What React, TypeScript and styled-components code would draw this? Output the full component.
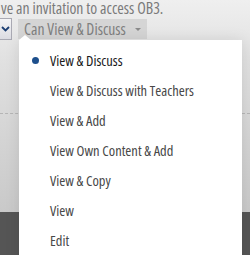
import React from "react";
import styled, { createGlobalStyle } from "styled-components";

const Global = createGlobalStyle`
  html, body { margin: 0; padding: 0; }
  body {
    width: 250px;
    height: 255px;
    overflow: hidden;
    font-family: "Open Sans", "Noto Sans", sans-serif;
    font-stretch: condensed;
    background: #d9d9d9;
  }
`;

const Page = styled.div`
  position: relative;
  width: 250px;
  height: 255px;
  overflow: hidden;
  display: flex;
  flex-direction: column;
  background: linear-gradient(to bottom, #efefef 0%, #e0e0e0 25%, #d2d2d2 60%, #c9c9c9 84%);
`;

const Intro = styled.div`
  font-size: 15.7px;
  line-height: 16px;
  height: 16px;
  color: #7a7a7a;
  padding-left: 1px;
  margin-top: 0;
  white-space: nowrap;
`;

const Controls = styled.div`
  display: flex;
  align-items: flex-start;
  gap: 5px;
  margin-top: 2px;
`;

const SelectBox = styled.div`
  width: 13px;
  height: 22px;
  margin-left: -1px;
  box-sizing: border-box;
  border: 1px solid #a9a9b3;
  border-left: none;
  background: linear-gradient(to bottom, #f4f4f6, #dcdce2);
  display: flex;
  align-items: center;
  justify-content: center;
`;

const DropButton = styled.div`
  width: 129px;
  height: 20px;
  margin-left: 1px;
  margin-top: 1px;
  box-sizing: border-box;
  background: #d5d5d5;
  color: #808080;
  font-size: 15.7px;
  line-height: 20px;
  padding-left: 6px;
  display: flex;
  align-items: center;
  gap: 9px;
  white-space: nowrap;
`;

const Caret = styled.span`
  width: 0;
  height: 0;
  border-left: 3px solid transparent;
  border-right: 3px solid transparent;
  border-top: 3px solid #8a8a8a;
  margin-top: 1px;
`;

const Section = styled.div`
  height: 73px;
  border-bottom: 1px dashed #b5b5b5;
`;

const Spacer = styled.div`
  flex: 0 0 98px;
`;

const Footer = styled.div`
  flex: 1;
  background: #555555;
`;

const Menu = styled.div`
  position: absolute;
  left: 19px;
  top: 40px;
  width: 223px;
  height: 240px;
  background: #ffffff;
  box-shadow: 0 0 14px rgba(0, 0, 0, 0.1);
  padding-top: 6px;
  box-sizing: border-box;
  display: flex;
  flex-direction: column;
  &::before {
    content: "";
    position: absolute;
    top: -5px;
    left: 0px;
    border-left: 6px solid transparent;
    border-right: 6px solid transparent;
    border-bottom: 5px solid #ffffff;
  }
`;

const Item = styled.div<{ $selected?: boolean }>`
  position: relative;
  height: 30px;
  line-height: 30px;
  padding-left: 31px;
  font-size: 14.5px;
  color: ${(p) => (p.$selected ? "#1a1a1a" : "#484848")};
  white-space: nowrap;
`;

const Bullet = styled.span`
  position: absolute;
  left: 13px;
  top: 11px;
  width: 7px;
  height: 7px;
  border-radius: 50%;
  background: #1d4f8c;
`;

const items = [
  "View & Discuss",
  "View & Discuss with Teachers",
  "View & Add",
  "View Own Content & Add",
  "View & Copy",
  "View",
  "Edit",
];

export default function App() {
  return (
    <>
      <Global />
      <Page>
        <Intro>ve an invitation to access OB3.</Intro>
        <Controls>
          <SelectBox>
            <svg width="9" height="6" viewBox="0 0 9 6">
              <path d="M1 1 L4.5 4.5 L8 1" fill="none" stroke="#1d3f73" strokeWidth="1.8" />
            </svg>
          </SelectBox>
          <DropButton>
            Can View &amp; Discuss
            <Caret />
          </DropButton>
        </Controls>
        <Section />
        <Spacer />
        <Footer />
        <Menu>
          {items.map((t, i) => (
            <Item key={t} $selected={i === 0}>
              {i === 0 && <Bullet />}
              {t}
            </Item>
          ))}
        </Menu>
      </Page>
    </>
  );
}
